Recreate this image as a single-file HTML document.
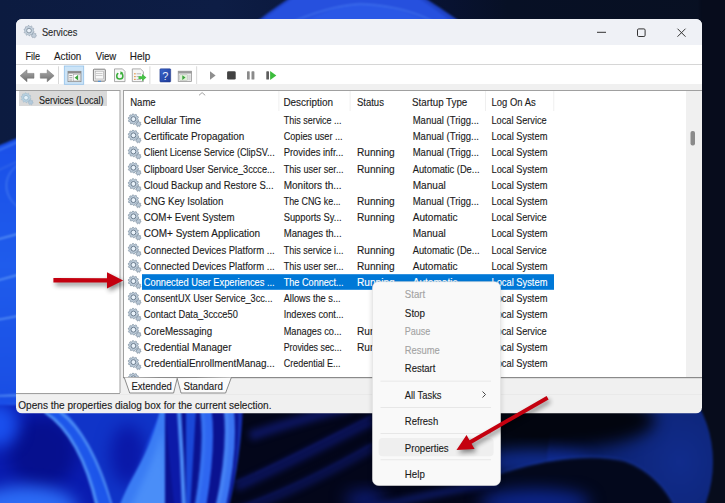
<!DOCTYPE html><html><head><meta charset="utf-8"><style>html,body{margin:0;padding:0;width:725px;height:503px;overflow:hidden;background:#0b1636}</style></head><body><svg width="725" height="503" viewBox="0 0 725 503" style="display:block;font-family:'Liberation Sans', sans-serif">
<defs>
<filter id="blur8" color-interpolation-filters="sRGB" x="-50%" y="-50%" width="200%" height="200%"><feGaussianBlur color-interpolation-filters="sRGB" stdDeviation="8"/></filter>
<filter id="blur3" color-interpolation-filters="sRGB" x="-50%" y="-50%" width="200%" height="200%"><feGaussianBlur color-interpolation-filters="sRGB" stdDeviation="3"/></filter>
<filter id="blur1" color-interpolation-filters="sRGB" x="-50%" y="-50%" width="200%" height="200%"><feGaussianBlur color-interpolation-filters="sRGB" stdDeviation="1"/></filter>
<filter id="shadow" color-interpolation-filters="sRGB" x="-20%" y="-20%" width="140%" height="140%"><feGaussianBlur color-interpolation-filters="sRGB" stdDeviation="2.5"/></filter>
<symbol id="gear" viewBox="0 0 16 16"><path d="M14.49,11.69 L14.35,12.32 L13.48,12.55 L13.17,12.94 L13.17,13.84 L12.59,14.13 L11.87,13.58 L11.38,13.59 L10.68,14.15 L10.09,13.87 L10.06,12.97 L9.75,12.59 L8.87,12.39 L8.72,11.76 L9.41,11.18 L9.51,10.70 L9.13,9.89 L9.52,9.37 L10.41,9.55 L10.85,9.33 L11.24,8.52 L11.89,8.51 L12.30,9.31 L12.75,9.52 L13.63,9.32 L14.04,9.83 L13.67,10.65 L13.78,11.13Z" fill="#b7c6d4" stroke="#6f8294" stroke-width="0.6"/><path d="M11.94,7.05 L11.73,7.92 L10.41,8.26 L10.04,8.88 L10.36,10.20 L9.68,10.79 L8.42,10.28 L7.75,10.56 L7.23,11.82 L6.34,11.90 L5.61,10.75 L4.91,10.58 L3.75,11.30 L2.98,10.84 L3.07,9.48 L2.60,8.93 L1.24,8.82 L0.89,8.00 L1.76,6.95 L1.70,6.23 L0.66,5.35 L0.87,4.48 L2.19,4.14 L2.56,3.52 L2.24,2.20 L2.92,1.61 L4.18,2.12 L4.85,1.84 L5.37,0.58 L6.26,0.50 L6.99,1.65 L7.69,1.82 L8.85,1.10 L9.62,1.56 L9.53,2.92 L10.00,3.47 L11.36,3.58 L11.71,4.40 L10.84,5.45 L10.90,6.17Z" fill="#bccbd9" stroke="#6f8294" stroke-width="0.6"/><circle cx="6.3" cy="6.2" r="2.6" fill="#e9f2fa" stroke="#5a6c7e" stroke-width="0.9"/></symbol>
<symbol id="gear2" viewBox="0 0 16 16"><path d="M11.94,7.05 L11.73,7.92 L10.41,8.26 L10.04,8.88 L10.36,10.20 L9.68,10.79 L8.42,10.28 L7.75,10.56 L7.23,11.82 L6.34,11.90 L5.61,10.75 L4.91,10.58 L3.75,11.30 L2.98,10.84 L3.07,9.48 L2.60,8.93 L1.24,8.82 L0.89,8.00 L1.76,6.95 L1.70,6.23 L0.66,5.35 L0.87,4.48 L2.19,4.14 L2.56,3.52 L2.24,2.20 L2.92,1.61 L4.18,2.12 L4.85,1.84 L5.37,0.58 L6.26,0.50 L6.99,1.65 L7.69,1.82 L8.85,1.10 L9.62,1.56 L9.53,2.92 L10.00,3.47 L11.36,3.58 L11.71,4.40 L10.84,5.45 L10.90,6.17Z" fill="#b9d2e2" stroke="#98b4c6" stroke-width="0.5"/><circle cx="6.3" cy="6.2" r="2.6" fill="#e6f2fa" stroke="#88a8bc" stroke-width="0.7"/><path d="M14.49,11.69 L14.35,12.32 L13.48,12.55 L13.17,12.94 L13.17,13.84 L12.59,14.13 L11.87,13.58 L11.38,13.59 L10.68,14.15 L10.09,13.87 L10.06,12.97 L9.75,12.59 L8.87,12.39 L8.72,11.76 L9.41,11.18 L9.51,10.70 L9.13,9.89 L9.52,9.37 L10.41,9.55 L10.85,9.33 L11.24,8.52 L11.89,8.51 L12.30,9.31 L12.75,9.52 L13.63,9.32 L14.04,9.83 L13.67,10.65 L13.78,11.13Z" fill="#b4cadb" stroke="#98b4c6" stroke-width="0.5"/></symbol>
</defs>
<rect width="725" height="503" fill="#0b1636"/>
<defs>
<linearGradient id="bgH" x1="0" y1="0" x2="1" y2="0">
 <stop offset="0" stop-color="#0c1b40"/>
 <stop offset="0.3" stop-color="#0d1d45"/>
 <stop offset="0.62" stop-color="#081231"/>
 <stop offset="0.7" stop-color="#071025"/>
 <stop offset="1" stop-color="#081022"/>
</linearGradient>
<radialGradient id="domeR" cx="0.8" cy="0.5" r="0.8">
 <stop offset="0" stop-color="#112c8c"/>
 <stop offset="0.6" stop-color="#0c2270"/>
 <stop offset="1" stop-color="#081650"/>
</radialGradient>
<linearGradient id="leftG" x1="0" y1="0" x2="0" y2="1">
 <stop offset="0" stop-color="#1a4ee8"/>
 <stop offset="0.35" stop-color="#1f5cec"/>
 <stop offset="0.7" stop-color="#1a4ee4"/>
 <stop offset="1" stop-color="#1b4fe6"/>
</linearGradient>
<linearGradient id="spike" x1="0" y1="0" x2="0" y2="1">
 <stop offset="0" stop-color="#2f6cf0"/>
 <stop offset="1" stop-color="#3f86fa"/>
</linearGradient>
<linearGradient id="navyBand" x1="0" y1="0" x2="1" y2="0">
 <stop offset="0" stop-color="#0f2fa0"/>
 <stop offset="1" stop-color="#0a1c60"/>
</linearGradient>
</defs>
<rect width="725" height="503" fill="url(#bgH)"/>
<g filter="url(#blur1)">
<!-- top dome -->
<path d="M246,30 C266,14 280,4 296,-6 L418,-6 C432,2 452,16 472,30 Z" fill="#1f44c8"/>
<path d="M250,30 C270,14 284,4 300,-6 L412,-6 C426,3 444,15 462,30 Z" fill="#2650de"/>
<path d="M290,30 C315,14 340,5 360,4 C390,5 420,15 440,30 Z" fill="#2a58e6"/>
<path d="M292,22 C318,11 340,5 360,4 C392,5 418,13 434,22" stroke="#4a7ef2" stroke-width="1" fill="none"/>
<!-- left strip blue -->
<path d="M-10,148 C0,146 10,141 40,128 L40,520 L-10,520 Z" fill="url(#leftG)"/>
<path d="M-5,152 C5,148 20,141 40,132" stroke="#4f86f2" stroke-width="1.2" fill="none"/>
<path d="M-5,172 C5,167 20,160 40,152" stroke="#3d70ea" stroke-width="1" fill="none"/>
<path d="M18,165 C3,175 2,195 18,207" stroke="#4f86f2" stroke-width="1" fill="none"/>
<path d="M-5,240 C5,238 12,235 40,228" stroke="#6aa2f8" stroke-width="1.4" fill="none"/>
<path d="M-5,281 C5,279 12,276 40,269" stroke="#6aa2f8" stroke-width="1.4" fill="none"/>
<path d="M-5,320 C5,319 12,317 40,311" stroke="#6aa2f8" stroke-width="1.4" fill="none"/>
<path d="M-5,396 C10,395.5 25,395 40,395" stroke="#6aa2f8" stroke-width="1.3" fill="none"/>
<path d="M-5,406 C10,405.5 25,405 40,405" stroke="#6aa2f8" stroke-width="1.3" fill="none"/>
<!-- bottom-left -->
<rect x="-10" y="405" width="250" height="110" fill="#1a4ce6"/>
<path d="M-10,405 L46,405 C70,425 88,460 96,510 L-10,510 Z" fill="#0a1cb0"/>
<ellipse cx="42" cy="452" rx="34" ry="36" fill="#06108e" filter="url(#blur8)"/>
<ellipse cx="-2" cy="425" rx="20" ry="22" fill="#1a50ee" filter="url(#blur8)"/>
<ellipse cx="25" cy="508" rx="52" ry="22" fill="#2c6cf6" filter="url(#blur8)"/>
<path d="M62,410 C84,428 100,460 114,510 L98,510 C92,470 80,440 46,410 Z" fill="#1d56ea"/>
<path d="M45,412 C66,426 86,455 98,510" stroke="#4a8cf6" stroke-width="3.2" fill="none"/>
<path d="M60,412 C82,428 98,458 114,510" stroke="#4a8af4" stroke-width="3" fill="none"/>
<path d="M66,412 L160,412 C150,440 130,470 120,510 L114,510 C104,470 90,440 66,412 Z" fill="#1034c8"/>
<ellipse cx="128" cy="455" rx="18" ry="30" fill="#0a18a8" filter="url(#blur8)"/>
<!-- spike -->
<path d="M118,510 C128,480 150,455 160,410 L165,410 C168,440 171,480 175,510 Z" fill="#3a7cf4"/>
<path d="M130,510 C140,485 155,460 162,430 C165,460 168,490 170,510 Z" fill="#4a8ef8" filter="url(#blur3)"/>
<!-- between spike and strand -->
<rect x="165" y="405" width="80" height="110" fill="#0a1290"/>
<path d="M165,410 L178,410 C180,440 182,480 184,510 L175,510 C171,480 168,440 165,410 Z" fill="#0c1aa8"/>
<path d="M179,410 C181,440 183,480 184,510" stroke="#4a8af5" stroke-width="4" fill="none"/>
<path d="M186,410 L196,410 C194,440 192,480 190,510 L186,510 Z" fill="#1a48d8"/>
<!-- curved ribbons -->
<path d="M206,410 C210,440 206,475 200,510" stroke="#2e66f0" stroke-width="11" fill="none"/>
<path d="M202,410 C206,440 202,475 196,510" stroke="#3a78f4" stroke-width="3" fill="none" filter="url(#blur1)"/>
<path d="M229,410 C232,440 228,475 220,510" stroke="#3a74f2" stroke-width="10" fill="none"/>
<path d="M226,410 C229,440 225,475 217,510" stroke="#4a88f6" stroke-width="3" fill="none" filter="url(#blur1)"/>
<path d="M240,410 C241,440 237,475 229,510" stroke="#1a3cc0" stroke-width="3" fill="none" filter="url(#blur1)"/>
<!-- dark area -->
<path d="M243,405 L505,405 L505,510 L228,510 C236,480 242,440 243,405 Z" fill="#03061a"/>
<path d="M250,436 C280,426 320,414 350,407" stroke="#0d1660" stroke-width="10" fill="none" filter="url(#blur3)"/>
<path d="M236,482 C270,468 320,442 372,416" stroke="#0c1562" stroke-width="8" fill="none" filter="url(#blur3)" transform="translate(0,5)"/>
<path d="M236,482 C270,468 320,442 372,416" stroke="#141f80" stroke-width="1.3" fill="none" filter="url(#blur1)"/>
<path d="M236,508 C270,496 320,474 372,444" stroke="#0b1458" stroke-width="7" fill="none" filter="url(#blur3)" transform="translate(0,4)"/>
<path d="M236,508 C270,496 320,474 372,444" stroke="#121c74" stroke-width="1.2" fill="none" filter="url(#blur1)"/>
<ellipse cx="365" cy="500" rx="20" ry="10" fill="#0c1a70" filter="url(#blur8)"/>
<path d="M360,512 C400,500 450,490 520,478" stroke="#10207a" stroke-width="5" fill="none" filter="url(#blur3)"/>
<!-- right strip -->
<rect x="700" y="-5" width="40" height="520" fill="#070c1c"/>
<!-- bottom-right -->
<rect x="498" y="405" width="205" height="110" fill="#040a1a"/>
<ellipse cx="630" cy="462" rx="83" ry="100" fill="url(#domeR)"/>
<ellipse cx="565" cy="420" rx="90" ry="28" fill="#02050f" filter="url(#blur8)"/>
<ellipse cx="535" cy="462" rx="55" ry="12" fill="#1232a6" opacity="0.85" filter="url(#blur8)"/>
<path d="M498,474 C540,460 590,452 625,461 C650,470 668,490 676,510 L498,510 Z" fill="#03081c"/>
<path d="M498,474 C540,460 590,452 625,461 C650,470 668,490 676,510" stroke="#1c3ca6" stroke-width="1.2" fill="none" filter="url(#blur1)"/>
<ellipse cx="535" cy="503" rx="55" ry="14" fill="#0c2488" filter="url(#blur8)"/>
</g>

<clipPath id="winclip"><rect x="16" y="19" width="686" height="394.5" rx="6" ry="6"/></clipPath>
<g clip-path="url(#winclip)">
<rect x="16" y="19" width="686" height="394.5" fill="#f0f0f0"/>
<rect x="16" y="19" width="686" height="26" fill="#eff1f6"/>
<rect x="16" y="45" width="686" height="39" fill="#ffffff"/>
<rect x="16" y="64" width="686" height="1" fill="#d6d6d6"/>
<rect x="16" y="84" width="686" height="6" fill="#f0f0f0"/>
<rect x="16" y="90" width="104" height="303" fill="#ffffff"/>
<rect x="16" y="90" width="104" height="1" fill="#a0a0a0"/>
<rect x="119.5" y="90" width="1" height="303" fill="#a0a0a0"/>
<rect x="16" y="393" width="104" height="1" fill="#a0a0a0"/>
<rect x="123" y="90" width="579" height="287" fill="#ffffff"/>
<rect x="123" y="90" width="579" height="1" fill="#a0a0a0"/>
<rect x="123" y="90" width="1" height="287" fill="#a0a0a0"/>
<rect x="123" y="377" width="579" height="1.2" fill="#8a8a8a"/>
<rect x="686" y="91" width="16" height="286" fill="#f0f0f0"/>
<rect x="690.5" y="131" width="4.5" height="14.5" rx="2" fill="#8b8b8b"/>
<rect x="16" y="394" width="686" height="0.6" fill="#e4e4e4"/>
</g>
<use href="#gear" x="23.3" y="25" width="14.5" height="14.5" opacity="0.8"/>
<text x="41.9" y="36.1" font-size="10.05" fill="#2a2a2a" stroke="#2a2a2a" stroke-width="0.12" textLength="35.4" lengthAdjust="spacingAndGlyphs">Services</text>
<path d="M597,32.3 H606" stroke="#333" stroke-width="1"/>
<rect x="637.5" y="28.9" width="7.6" height="7.6" rx="1.2" fill="none" stroke="#333" stroke-width="1"/>
<path d="M677.5,28.7 L685.5,36.7 M685.5,28.7 L677.5,36.7" stroke="#333" stroke-width="1"/>
<text x="25.4" y="59.8" font-size="10.05" fill="#1b1b1b" stroke="#1b1b1b" stroke-width="0.12" textLength="14.7" lengthAdjust="spacingAndGlyphs">File</text>
<text x="54.1" y="59.8" font-size="10.05" fill="#1b1b1b" stroke="#1b1b1b" stroke-width="0.12" textLength="27.2" lengthAdjust="spacingAndGlyphs">Action</text>
<text x="95.7" y="59.8" font-size="10.05" fill="#1b1b1b" stroke="#1b1b1b" stroke-width="0.12" textLength="20.6" lengthAdjust="spacingAndGlyphs">View</text>
<text x="129.8" y="59.8" font-size="10.05" fill="#1b1b1b" stroke="#1b1b1b" stroke-width="0.12" textLength="20.5" lengthAdjust="spacingAndGlyphs">Help</text>
<clipPath id="listclip"><rect x="124" y="91" width="562" height="286"/></clipPath>
<g clip-path="url(#listclip)">
<text x="130.2" y="106.4" font-size="10.05" fill="#1b1b1b" stroke="#1b1b1b" stroke-width="0.12" textLength="25.5" lengthAdjust="spacingAndGlyphs">Name</text>
<path d="M199,95.3 L202.1,92.6 L205.2,95.3" fill="none" stroke="#8a8a8a" stroke-width="0.8"/>
<rect x="278.5" y="91" width="0.8" height="20" fill="#ececec"/>
<rect x="349.7" y="91" width="0.8" height="20" fill="#ececec"/>
<rect x="485" y="91" width="0.8" height="20" fill="#ececec"/>
<rect x="553.4" y="91" width="0.8" height="20" fill="#ececec"/>
<text x="283.4" y="106.4" font-size="10.05" fill="#1b1b1b" stroke="#1b1b1b" stroke-width="0.12" textLength="49.7" lengthAdjust="spacingAndGlyphs">Description</text>
<text x="356.9" y="106.4" font-size="10.05" fill="#1b1b1b" stroke="#1b1b1b" stroke-width="0.12" textLength="27.0" lengthAdjust="spacingAndGlyphs">Status</text>
<text x="412.1" y="106.4" font-size="10.05" fill="#1b1b1b" stroke="#1b1b1b" stroke-width="0.12" textLength="55.2" lengthAdjust="spacingAndGlyphs">Startup Type</text>
<text x="491.6" y="106.4" font-size="10.05" fill="#1b1b1b" stroke="#1b1b1b" stroke-width="0.12" textLength="44.1" lengthAdjust="spacingAndGlyphs">Log On As</text>
<rect x="142" y="274.2" width="412" height="15.6" fill="#0078d7"/>
<use href="#gear" x="127.5" y="113.30" width="15" height="15"/>
<text x="143.8" y="123.9" font-size="10.05" fill="#1b1b1b" stroke="#1b1b1b" stroke-width="0.12" textLength="57.1" lengthAdjust="spacingAndGlyphs">Cellular Time</text>
<text x="283.7" y="123.9" font-size="10.05" fill="#1b1b1b" stroke="#1b1b1b" stroke-width="0.12" textLength="57.9" lengthAdjust="spacingAndGlyphs">This service ...</text>
<text x="412.7" y="123.9" font-size="10.05" fill="#1b1b1b" stroke="#1b1b1b" stroke-width="0.12" textLength="66.3" lengthAdjust="spacingAndGlyphs">Manual (Trigg...</text>
<text x="491.5" y="123.9" font-size="10.05" fill="#1b1b1b" stroke="#1b1b1b" stroke-width="0.12" textLength="55.2" lengthAdjust="spacingAndGlyphs">Local Service</text>
<use href="#gear" x="127.5" y="129.50" width="15" height="15"/>
<text x="143.8" y="140.1" font-size="10.05" fill="#1b1b1b" stroke="#1b1b1b" stroke-width="0.12" textLength="100.5" lengthAdjust="spacingAndGlyphs">Certificate Propagation</text>
<text x="283.7" y="140.1" font-size="10.05" fill="#1b1b1b" stroke="#1b1b1b" stroke-width="0.12" textLength="58.9" lengthAdjust="spacingAndGlyphs">Copies user ...</text>
<text x="412.7" y="140.1" font-size="10.05" fill="#1b1b1b" stroke="#1b1b1b" stroke-width="0.12" textLength="66.3" lengthAdjust="spacingAndGlyphs">Manual (Trigg...</text>
<text x="491.5" y="140.1" font-size="10.05" fill="#1b1b1b" stroke="#1b1b1b" stroke-width="0.12" textLength="55.9" lengthAdjust="spacingAndGlyphs">Local System</text>
<use href="#gear" x="127.5" y="145.70" width="15" height="15"/>
<text x="143.8" y="156.3" font-size="10.05" fill="#1b1b1b" stroke="#1b1b1b" stroke-width="0.12" textLength="130.9" lengthAdjust="spacingAndGlyphs">Client License Service (ClipSV...</text>
<text x="283.7" y="156.3" font-size="10.05" fill="#1b1b1b" stroke="#1b1b1b" stroke-width="0.12" textLength="59.8" lengthAdjust="spacingAndGlyphs">Provides infr...</text>
<text x="357" y="156.3" font-size="10.12" fill="#1b1b1b" stroke="#1b1b1b" stroke-width="0.12" textLength="37.7" lengthAdjust="spacingAndGlyphs">Running</text>
<text x="412.7" y="156.3" font-size="10.05" fill="#1b1b1b" stroke="#1b1b1b" stroke-width="0.12" textLength="66.3" lengthAdjust="spacingAndGlyphs">Manual (Trigg...</text>
<text x="491.5" y="156.3" font-size="10.05" fill="#1b1b1b" stroke="#1b1b1b" stroke-width="0.12" textLength="55.9" lengthAdjust="spacingAndGlyphs">Local System</text>
<use href="#gear" x="127.5" y="161.90" width="15" height="15"/>
<text x="143.8" y="172.5" font-size="10.05" fill="#1b1b1b" stroke="#1b1b1b" stroke-width="0.12" textLength="130.9" lengthAdjust="spacingAndGlyphs">Clipboard User Service_3ccce...</text>
<text x="283.7" y="172.5" font-size="10.05" fill="#1b1b1b" stroke="#1b1b1b" stroke-width="0.12" textLength="59.8" lengthAdjust="spacingAndGlyphs">This user ser...</text>
<text x="357" y="172.5" font-size="10.12" fill="#1b1b1b" stroke="#1b1b1b" stroke-width="0.12" textLength="37.7" lengthAdjust="spacingAndGlyphs">Running</text>
<text x="412.7" y="172.5" font-size="10.05" fill="#1b1b1b" stroke="#1b1b1b" stroke-width="0.12" textLength="66.9" lengthAdjust="spacingAndGlyphs">Automatic (De...</text>
<text x="491.5" y="172.5" font-size="10.05" fill="#1b1b1b" stroke="#1b1b1b" stroke-width="0.12" textLength="55.9" lengthAdjust="spacingAndGlyphs">Local System</text>
<use href="#gear" x="127.5" y="178.10" width="15" height="15"/>
<text x="143.8" y="188.7" font-size="10.05" fill="#1b1b1b" stroke="#1b1b1b" stroke-width="0.12" textLength="129.8" lengthAdjust="spacingAndGlyphs">Cloud Backup and Restore S...</text>
<text x="283.7" y="188.7" font-size="10.05" fill="#1b1b1b" stroke="#1b1b1b" stroke-width="0.12" textLength="57.9" lengthAdjust="spacingAndGlyphs">Monitors th...</text>
<text x="412.7" y="188.7" font-size="10.09" fill="#1b1b1b" stroke="#1b1b1b" stroke-width="0.12" textLength="33.1" lengthAdjust="spacingAndGlyphs">Manual</text>
<text x="491.5" y="188.7" font-size="10.05" fill="#1b1b1b" stroke="#1b1b1b" stroke-width="0.12" textLength="55.9" lengthAdjust="spacingAndGlyphs">Local System</text>
<use href="#gear" x="127.5" y="194.30" width="15" height="15"/>
<text x="143.8" y="204.9" font-size="10.05" fill="#1b1b1b" stroke="#1b1b1b" stroke-width="0.12" textLength="79.6" lengthAdjust="spacingAndGlyphs">CNG Key Isolation</text>
<text x="283.7" y="204.9" font-size="10.05" fill="#1b1b1b" stroke="#1b1b1b" stroke-width="0.12" textLength="56.9" lengthAdjust="spacingAndGlyphs">The CNG ke...</text>
<text x="357" y="204.9" font-size="10.12" fill="#1b1b1b" stroke="#1b1b1b" stroke-width="0.12" textLength="37.7" lengthAdjust="spacingAndGlyphs">Running</text>
<text x="412.7" y="204.9" font-size="10.05" fill="#1b1b1b" stroke="#1b1b1b" stroke-width="0.12" textLength="66.3" lengthAdjust="spacingAndGlyphs">Manual (Trigg...</text>
<text x="491.5" y="204.9" font-size="10.05" fill="#1b1b1b" stroke="#1b1b1b" stroke-width="0.12" textLength="55.9" lengthAdjust="spacingAndGlyphs">Local System</text>
<use href="#gear" x="127.5" y="210.50" width="15" height="15"/>
<text x="143.8" y="221.1" font-size="10.05" fill="#1b1b1b" stroke="#1b1b1b" stroke-width="0.12" textLength="90.7" lengthAdjust="spacingAndGlyphs">COM+ Event System</text>
<text x="283.7" y="221.1" font-size="10.05" fill="#1b1b1b" stroke="#1b1b1b" stroke-width="0.12" textLength="57.9" lengthAdjust="spacingAndGlyphs">Supports Sy...</text>
<text x="357" y="221.1" font-size="10.12" fill="#1b1b1b" stroke="#1b1b1b" stroke-width="0.12" textLength="37.7" lengthAdjust="spacingAndGlyphs">Running</text>
<text x="412.7" y="221.1" font-size="10.08" fill="#1b1b1b" stroke="#1b1b1b" stroke-width="0.12" textLength="44.8" lengthAdjust="spacingAndGlyphs">Automatic</text>
<text x="491.5" y="221.1" font-size="10.05" fill="#1b1b1b" stroke="#1b1b1b" stroke-width="0.12" textLength="55.2" lengthAdjust="spacingAndGlyphs">Local Service</text>
<use href="#gear" x="127.5" y="226.70" width="15" height="15"/>
<text x="143.8" y="237.3" font-size="10.05" fill="#1b1b1b" stroke="#1b1b1b" stroke-width="0.12" textLength="116.3" lengthAdjust="spacingAndGlyphs">COM+ System Application</text>
<text x="283.7" y="237.3" font-size="10.05" fill="#1b1b1b" stroke="#1b1b1b" stroke-width="0.12" textLength="57.9" lengthAdjust="spacingAndGlyphs">Manages th...</text>
<text x="412.7" y="237.3" font-size="10.09" fill="#1b1b1b" stroke="#1b1b1b" stroke-width="0.12" textLength="33.1" lengthAdjust="spacingAndGlyphs">Manual</text>
<text x="491.5" y="237.3" font-size="10.05" fill="#1b1b1b" stroke="#1b1b1b" stroke-width="0.12" textLength="55.9" lengthAdjust="spacingAndGlyphs">Local System</text>
<use href="#gear" x="127.5" y="242.90" width="15" height="15"/>
<text x="143.8" y="253.5" font-size="10.05" fill="#1b1b1b" stroke="#1b1b1b" stroke-width="0.12" textLength="130.9" lengthAdjust="spacingAndGlyphs">Connected Devices Platform ...</text>
<text x="283.7" y="253.5" font-size="10.05" fill="#1b1b1b" stroke="#1b1b1b" stroke-width="0.12" textLength="59.9" lengthAdjust="spacingAndGlyphs">This service i...</text>
<text x="357" y="253.5" font-size="10.12" fill="#1b1b1b" stroke="#1b1b1b" stroke-width="0.12" textLength="37.7" lengthAdjust="spacingAndGlyphs">Running</text>
<text x="412.7" y="253.5" font-size="10.05" fill="#1b1b1b" stroke="#1b1b1b" stroke-width="0.12" textLength="66.9" lengthAdjust="spacingAndGlyphs">Automatic (De...</text>
<text x="491.5" y="253.5" font-size="10.05" fill="#1b1b1b" stroke="#1b1b1b" stroke-width="0.12" textLength="55.2" lengthAdjust="spacingAndGlyphs">Local Service</text>
<use href="#gear" x="127.5" y="259.10" width="15" height="15"/>
<text x="143.8" y="269.7" font-size="10.05" fill="#1b1b1b" stroke="#1b1b1b" stroke-width="0.12" textLength="130.9" lengthAdjust="spacingAndGlyphs">Connected Devices Platform ...</text>
<text x="283.7" y="269.7" font-size="10.05" fill="#1b1b1b" stroke="#1b1b1b" stroke-width="0.12" textLength="59.9" lengthAdjust="spacingAndGlyphs">This user ser...</text>
<text x="357" y="269.7" font-size="10.12" fill="#1b1b1b" stroke="#1b1b1b" stroke-width="0.12" textLength="37.7" lengthAdjust="spacingAndGlyphs">Running</text>
<text x="412.7" y="269.7" font-size="10.08" fill="#1b1b1b" stroke="#1b1b1b" stroke-width="0.12" textLength="44.8" lengthAdjust="spacingAndGlyphs">Automatic</text>
<text x="491.5" y="269.7" font-size="10.05" fill="#1b1b1b" stroke="#1b1b1b" stroke-width="0.12" textLength="55.9" lengthAdjust="spacingAndGlyphs">Local System</text>
<use href="#gear" x="127.5" y="275.30" width="15" height="15"/>
<text x="143.8" y="285.9" font-size="10.05" fill="#ffffff" stroke="#ffffff" stroke-width="0.12" textLength="130.9" lengthAdjust="spacingAndGlyphs">Connected User Experiences ...</text>
<text x="283.7" y="285.9" font-size="10.05" fill="#ffffff" stroke="#ffffff" stroke-width="0.12" textLength="59.9" lengthAdjust="spacingAndGlyphs">The Connect...</text>
<text x="357" y="285.9" font-size="10.12" fill="#ffffff" stroke="#ffffff" stroke-width="0.12" textLength="37.7" lengthAdjust="spacingAndGlyphs">Running</text>
<text x="412.7" y="285.9" font-size="10.08" fill="#ffffff" stroke="#ffffff" stroke-width="0.12" textLength="44.8" lengthAdjust="spacingAndGlyphs">Automatic</text>
<text x="491.5" y="285.9" font-size="10.05" fill="#ffffff" stroke="#ffffff" stroke-width="0.12" textLength="55.9" lengthAdjust="spacingAndGlyphs">Local System</text>
<use href="#gear" x="127.5" y="291.50" width="15" height="15"/>
<text x="143.8" y="302.1" font-size="10.05" fill="#1b1b1b" stroke="#1b1b1b" stroke-width="0.12" textLength="128.7" lengthAdjust="spacingAndGlyphs">ConsentUX User Service_3cc...</text>
<text x="283.7" y="302.1" font-size="10.05" fill="#1b1b1b" stroke="#1b1b1b" stroke-width="0.12" textLength="56.9" lengthAdjust="spacingAndGlyphs">Allows the s...</text>
<text x="412.7" y="302.1" font-size="10.09" fill="#1b1b1b" stroke="#1b1b1b" stroke-width="0.12" textLength="33.1" lengthAdjust="spacingAndGlyphs">Manual</text>
<text x="491.5" y="302.1" font-size="10.05" fill="#1b1b1b" stroke="#1b1b1b" stroke-width="0.12" textLength="55.9" lengthAdjust="spacingAndGlyphs">Local System</text>
<use href="#gear" x="127.5" y="307.70" width="15" height="15"/>
<text x="143.8" y="318.3" font-size="10.05" fill="#1b1b1b" stroke="#1b1b1b" stroke-width="0.12" textLength="94.1" lengthAdjust="spacingAndGlyphs">Contact Data_3ccce50</text>
<text x="283.7" y="318.3" font-size="10.05" fill="#1b1b1b" stroke="#1b1b1b" stroke-width="0.12" textLength="59.9" lengthAdjust="spacingAndGlyphs">Indexes cont...</text>
<text x="412.7" y="318.3" font-size="10.09" fill="#1b1b1b" stroke="#1b1b1b" stroke-width="0.12" textLength="33.1" lengthAdjust="spacingAndGlyphs">Manual</text>
<text x="491.5" y="318.3" font-size="10.05" fill="#1b1b1b" stroke="#1b1b1b" stroke-width="0.12" textLength="55.9" lengthAdjust="spacingAndGlyphs">Local System</text>
<use href="#gear" x="127.5" y="323.90" width="15" height="15"/>
<text x="143.8" y="334.5" font-size="10.05" fill="#1b1b1b" stroke="#1b1b1b" stroke-width="0.12" textLength="68.4" lengthAdjust="spacingAndGlyphs">CoreMessaging</text>
<text x="283.7" y="334.5" font-size="10.05" fill="#1b1b1b" stroke="#1b1b1b" stroke-width="0.12" textLength="57.9" lengthAdjust="spacingAndGlyphs">Manages co...</text>
<text x="357" y="334.5" font-size="10.12" fill="#1b1b1b" stroke="#1b1b1b" stroke-width="0.12" textLength="37.7" lengthAdjust="spacingAndGlyphs">Running</text>
<text x="412.7" y="334.5" font-size="10.08" fill="#1b1b1b" stroke="#1b1b1b" stroke-width="0.12" textLength="44.8" lengthAdjust="spacingAndGlyphs">Automatic</text>
<text x="491.5" y="334.5" font-size="10.05" fill="#1b1b1b" stroke="#1b1b1b" stroke-width="0.12" textLength="55.2" lengthAdjust="spacingAndGlyphs">Local Service</text>
<use href="#gear" x="127.5" y="340.10" width="15" height="15"/>
<text x="143.8" y="350.7" font-size="10.05" fill="#1b1b1b" stroke="#1b1b1b" stroke-width="0.12" textLength="87.7" lengthAdjust="spacingAndGlyphs">Credential Manager</text>
<text x="283.7" y="350.7" font-size="10.05" fill="#1b1b1b" stroke="#1b1b1b" stroke-width="0.12" textLength="57.9" lengthAdjust="spacingAndGlyphs">Provides sec...</text>
<text x="357" y="350.7" font-size="10.12" fill="#1b1b1b" stroke="#1b1b1b" stroke-width="0.12" textLength="37.7" lengthAdjust="spacingAndGlyphs">Running</text>
<text x="412.7" y="350.7" font-size="10.09" fill="#1b1b1b" stroke="#1b1b1b" stroke-width="0.12" textLength="33.1" lengthAdjust="spacingAndGlyphs">Manual</text>
<text x="491.5" y="350.7" font-size="10.05" fill="#1b1b1b" stroke="#1b1b1b" stroke-width="0.12" textLength="55.9" lengthAdjust="spacingAndGlyphs">Local System</text>
<use href="#gear" x="127.5" y="356.30" width="15" height="15"/>
<text x="143.8" y="366.9" font-size="10.05" fill="#1b1b1b" stroke="#1b1b1b" stroke-width="0.12" textLength="130.9" lengthAdjust="spacingAndGlyphs">CredentialEnrollmentManag...</text>
<text x="283.7" y="366.9" font-size="10.05" fill="#1b1b1b" stroke="#1b1b1b" stroke-width="0.12" textLength="56.9" lengthAdjust="spacingAndGlyphs">Credential E...</text>
<text x="412.7" y="366.9" font-size="10.09" fill="#1b1b1b" stroke="#1b1b1b" stroke-width="0.12" textLength="33.1" lengthAdjust="spacingAndGlyphs">Manual</text>
<text x="491.5" y="366.9" font-size="10.05" fill="#1b1b1b" stroke="#1b1b1b" stroke-width="0.12" textLength="55.9" lengthAdjust="spacingAndGlyphs">Local System</text>
<use href="#gear" x="127.5" y="372.50" width="15" height="15"/>
</g>
<rect x="19" y="91" width="88" height="15" fill="#d9d9d9"/>
<use href="#gear2" x="20.5" y="92.3" width="14" height="14"/>
<text x="39" y="103.7" font-size="10.2" fill="#1b1b1b" stroke="#1b1b1b" stroke-width="0.12" textLength="64.5" lengthAdjust="spacingAndGlyphs">Services (Local)</text>
<path d="M124.3,377.6 L129.7,393 L173.6,393 L177.2,378.3 Z" fill="#fbfbfb"/>
<path d="M177.2,378.3 L181,393 L225.6,393 L231.3,377.6 Z" fill="#fbfbfb"/>
<path d="M124.3,377.6 L129.7,393 L173.6,393 L177.2,378.3 L181,393 L225.6,393 L231.3,377.6" fill="none" stroke="#707070" stroke-width="0.8"/>
<text x="131.4" y="389.6" font-size="10.05" fill="#1b1b1b" stroke="#1b1b1b" stroke-width="0.12" textLength="40.4" lengthAdjust="spacingAndGlyphs">Extended</text>
<text x="183.4" y="389.6" font-size="10.05" fill="#1b1b1b" stroke="#1b1b1b" stroke-width="0.12" textLength="39.5" lengthAdjust="spacingAndGlyphs">Standard</text>
<text x="18.3" y="408.5" font-size="10.05" fill="#1b1b1b" stroke="#1b1b1b" stroke-width="0.12" textLength="253.2" lengthAdjust="spacingAndGlyphs">Opens the properties dialog box for the current selection.</text>
<g>
<!-- back arrow --><linearGradient id="arrG" x1="0" y1="0" x2="0" y2="1"><stop offset="0" stop-color="#a8a8a8"/><stop offset="0.5" stop-color="#8c8c8c"/><stop offset="1" stop-color="#6c6c6c"/></linearGradient>
<path d="M20.2,75.7 L27,69.8 L27,73.4 L34,73.4 L34,78.2 L27,78.2 L27,81.8 Z" fill="url(#arrG)" stroke="#707070" stroke-width="0.5" stroke-linejoin="round"/>
<path d="M54.1,75.7 L47.2,69.8 L47.2,73.4 L40.3,73.4 L40.3,78.2 L47.2,78.2 L47.2,81.8 Z" fill="url(#arrG)" stroke="#707070" stroke-width="0.5" stroke-linejoin="round"/>
<rect x="58.2" y="66.3" width="0.8" height="17.7" fill="#d0d0d0"/>
<!-- highlighted button -->
<rect x="64.3" y="66" width="19.4" height="18.3" fill="#cce4f7" stroke="#92c1ea" stroke-width="0.8"/>
<rect x="68" y="71.3" width="13" height="10.4" fill="#f4f4f4" stroke="#7c7c7c" stroke-width="0.7"/>
<rect x="68" y="71.3" width="13" height="2.2" fill="#8a8a8a"/>
<rect x="69.3" y="75" width="3" height="0.9" fill="#9a9a9a"/>
<rect x="69.3" y="77.3" width="3" height="0.9" fill="#9a9a9a"/>
<rect x="69.3" y="79.6" width="3" height="0.9" fill="#9a9a9a"/>
<rect x="73.5" y="74.5" width="6.5" height="6.4" fill="#ffffff" stroke="#a0a0a0" stroke-width="0.5"/>
<path d="M78.2,74.8 L74.6,77.7 L78.2,80.6 Z" fill="#3aa33a"/>
<!-- properties -->
<rect x="93.4" y="69.2" width="11.9" height="12" rx="0.8" fill="#ededed" stroke="#707070" stroke-width="0.9"/>
<rect x="95.2" y="71.2" width="8.3" height="7.8" fill="#f8f8f8" stroke="#a8a8a8" stroke-width="0.6"/>
<path d="M96,73.5 H102.5 M96,75.5 H102.5" stroke="#b0b0b0" stroke-width="0.6"/>
<rect x="98" y="80.8" width="3" height="1" fill="#3d8de0"/>
<!-- refresh doc -->
<path d="M114.5,68.9 H122.5 L125,71.4 V81.6 H114.5 Z" fill="#f6f6f6" stroke="#8a8a8a" stroke-width="0.7"/>
<circle cx="119.8" cy="76" r="3.1" fill="none" stroke="#3bae3b" stroke-width="1.5"/>
<path d="M117.5,72 L121.5,72 L119.5,75 Z" fill="#ffffff"/>
<path d="M120.5,71.2 L123.4,73 L120.3,74.8 Z" fill="#3bae3b"/>
<!-- export list -->
<path d="M132.3,68.9 H140.5 L143.4,71.6 V81.6 H132.3 Z" fill="#f6f6f6" stroke="#8a8a8a" stroke-width="0.7"/>
<rect x="134.2" y="73.2" width="1.4" height="1.2" fill="#e08a30"/>
<rect x="134.2" y="76" width="1.4" height="1.2" fill="#e08a30"/>
<rect x="134.2" y="78.8" width="1.4" height="1.2" fill="#e08a30"/>
<path d="M136.6,73.8 H141 M136.6,76.6 H141 M136.6,79.4 H141" stroke="#9a9a9a" stroke-width="0.7"/>
<path d="M138.5,76.2 H142 V74 L146.4,77.6 L142,81.2 V79 H138.5 Z" fill="#46c046"/>
<rect x="149.5" y="66.3" width="0.8" height="17.7" fill="#d0d0d0"/>
<!-- help -->
<linearGradient id="helpg" x1="0" y1="0" x2="1" y2="1"><stop offset="0" stop-color="#3a66cc"/><stop offset="1" stop-color="#1d3a98"/></linearGradient>
<rect x="159.9" y="68.8" width="10.8" height="13.2" rx="0.8" fill="url(#helpg)" stroke="#1c3280" stroke-width="0.5"/>
<text x="165.3" y="80" font-size="11" fill="#e8eefc" text-anchor="middle">?</text>
<!-- window w/ green -->
<rect x="178.2" y="71.2" width="13.4" height="10.4" fill="#eeeeee" stroke="#8a8a8a" stroke-width="0.7"/>
<rect x="178.2" y="71.2" width="13.4" height="2.3" fill="#9a9a9a"/>
<rect x="179.8" y="74.8" width="7.6" height="5.6" fill="#dff0d8" stroke="#a8a8a8" stroke-width="0.4"/>
<path d="M182.3,75.2 L185.5,77.6 L182.3,80 Z" fill="#3aa33a"/>
<rect x="188.3" y="74.8" width="2.3" height="5.6" fill="#d8d8d8"/>
<rect x="196.3" y="66.3" width="0.8" height="17.7" fill="#d0d0d0"/>
<!-- play/stop/pause/restart -->
<path d="M210,71.3 L215.6,75.5 L210,79.7 Z" fill="#8e8e8e"/>
<rect x="227.1" y="71.3" width="8.6" height="8.3" rx="1.3" fill="#424242"/>
<rect x="247" y="71.3" width="2.7" height="8.3" rx="0.6" fill="#8a8a8a"/>
<rect x="251.5" y="71.3" width="2.9" height="8.3" rx="0.6" fill="#8a8a8a"/>
<rect x="266.3" y="71.3" width="2.7" height="8.3" rx="0.6" fill="#5e5e5e"/>
<path d="M270.1,71 L276.3,75.5 L270.1,80 Z" fill="#3cbc3c"/>
</g>

<rect x="371.5" y="282.7" width="130.0" height="204.8" rx="7" fill="#000" opacity="0.12" filter="url(#shadow)"/>
<rect x="372.5" y="281.7" width="128.0" height="203.8" rx="6" fill="#f9f9f9" stroke="#e0e0e0" stroke-width="0.6"/>
<rect x="378.6" y="438" width="115" height="18.3" rx="4" fill="#efefef"/>
<text x="404.8" y="297.9" font-size="10.3" fill="#a3a3a3" stroke="#a3a3a3" stroke-width="0.12" textLength="20.3" lengthAdjust="spacingAndGlyphs">Start</text>
<text x="404.8" y="316.5" font-size="10.3" fill="#1b1b1b" stroke="#1b1b1b" stroke-width="0.12" textLength="20.3" lengthAdjust="spacingAndGlyphs">Stop</text>
<text x="404.8" y="334.9" font-size="10.3" fill="#a3a3a3" stroke="#a3a3a3" stroke-width="0.12" textLength="25.6" lengthAdjust="spacingAndGlyphs">Pause</text>
<text x="404.8" y="353.7" font-size="10.3" fill="#a3a3a3" stroke="#a3a3a3" stroke-width="0.12" textLength="35.0" lengthAdjust="spacingAndGlyphs">Resume</text>
<text x="404.8" y="372.3" font-size="10.3" fill="#1b1b1b" stroke="#1b1b1b" stroke-width="0.12" textLength="30.6" lengthAdjust="spacingAndGlyphs">Restart</text>
<text x="404.8" y="398.6" font-size="10.3" fill="#1b1b1b" stroke="#1b1b1b" stroke-width="0.12" textLength="36.7" lengthAdjust="spacingAndGlyphs">All Tasks</text>
<text x="404.8" y="425.3" font-size="10.3" fill="#1b1b1b" stroke="#1b1b1b" stroke-width="0.12" textLength="33.4" lengthAdjust="spacingAndGlyphs">Refresh</text>
<text x="404.8" y="451.6" font-size="10.3" fill="#1b1b1b" stroke="#1b1b1b" stroke-width="0.12" textLength="43.9" lengthAdjust="spacingAndGlyphs">Properties</text>
<text x="404.8" y="477.8" font-size="10.3" fill="#1b1b1b" stroke="#1b1b1b" stroke-width="0.12" textLength="20.0" lengthAdjust="spacingAndGlyphs">Help</text>
<rect x="380.5" y="380.7" width="110.5" height="0.8" fill="#e3e3e3"/>
<rect x="380.5" y="407" width="110.5" height="0.8" fill="#e3e3e3"/>
<rect x="380.5" y="433.2" width="110.5" height="0.8" fill="#e3e3e3"/>
<rect x="380.5" y="459.4" width="110.5" height="0.8" fill="#e3e3e3"/>
<path d="M482.5,391.5 L485.5,394.5 L482.5,397.5" fill="none" stroke="#333" stroke-width="0.9"/>
<g>
<path d="M53.40,282.50 L107.00,282.58 L106.99,288.48 L123.20,280.40 L107.01,272.28 L107.00,278.18 L53.40,278.10Z" transform="translate(2,3)" fill="#000" opacity="0.45" filter="url(#shadow)"/>
<path d="M546.60,395.97 L469.55,440.20 L466.52,434.91 L456.50,450.00 L474.58,448.96 L471.55,443.67 L548.60,399.43Z" transform="translate(2,3)" fill="#000" opacity="0.45" filter="url(#shadow)"/>
<path d="M53.40,282.50 L107.00,282.58 L106.99,288.48 L123.20,280.40 L107.01,272.28 L107.00,278.18 L53.40,278.10Z" fill="#c4000f"/>
<path d="M546.60,395.97 L469.55,440.20 L466.52,434.91 L456.50,450.00 L474.58,448.96 L471.55,443.67 L548.60,399.43Z" fill="#c4000f"/>
</g>
</svg></body></html>
